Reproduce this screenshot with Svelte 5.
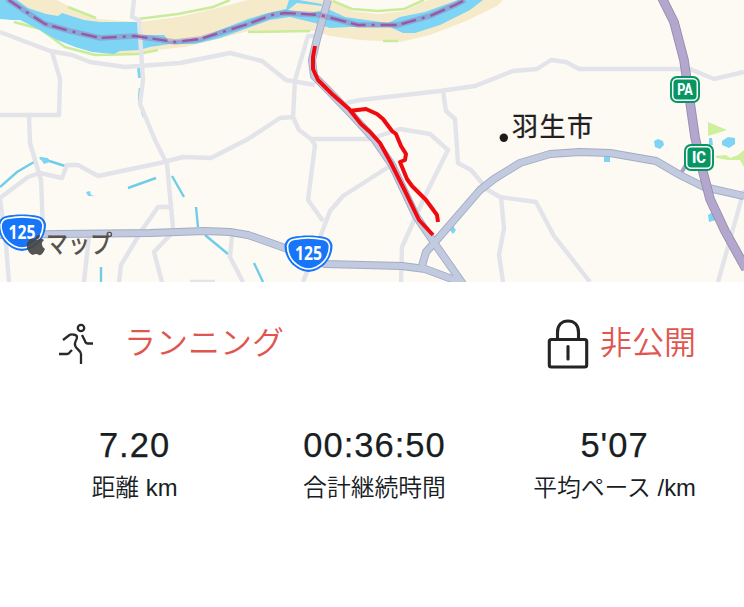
<script>
  const minorRoads = [
    'M0 32L50 51L72 55L90 62L125 67L180 63L230 53L262 61L286 80L315 85',
    'M134 0L132 17L139 20L142 65L143 80L140 104L155 140L167 164L173 228',
    'M52 52L60 79L59 115H0',
    'M29 115L30 143L41 180L43 230',
    'M0 198L28 177L40 173L62 178L67 165L78 165L98 176L160 163L183 157L211 158L248 139L280 118L293 117',
    'M315 36H308L295 80L293 117L299 130L311 139L315 145L308 200L323 221',
    'M311 139L370 139L400 129L430 134L448 150L425 196L402 247L401 282',
    'M346 103L360 100L440 91L475 86L513 71L537 69L551 60L566 62L579 69L690 69L714 79L744 72',
    'M443 91L446 111L455 119L458 163L471 170L488 190L500 197L536 202L554 236L590 282',
    'M501 197L504 228L499 255L503 282',
    'M390 166L343 196L330 211L303 282',
    'M173 207H158L142 230L121 265L119 282',
    'M173 232L154 252L162 282M89 236L84 282M232 236L230 257L243 282',
    'M0 198L6 245L9 282M718 282L744 190M190 282H215'
  ];
  const trunks = [
    'M0 235L60 234L150 233L205 231L230 232L248 235L285 248L325 264L402 266L425 269L460 282',
    'M422 266L426 252L435 242L480 190L494 179L520 163L550 154L580 152L610 153L656 161L680 175L704 187L744 196',
    'M328 0L317 39L312 60L314 76L327 89L351 114L374 139L392 165L416 216L435 244L463 284'
  ];
  const expressway = 'M662 -2L674 22L684 60L695 137L702 168L710 199L725 231L746 269';
  const green = [
    'M14 22L40 29L65 47L95 55L138 54L158 50', 'M68 7L96 18',
    'M138 19L178 14L213 7L230 0', 'M248 32L310 31M383 41H398',
    'M333 1L352 9L378 11L404 9L424 0'
  ];
  const streams = [
    'M0 187L17 172L34 162', 'M40 158L65 166', 'M128 188L156 178',
    'M172 176L184 197', 'M196 207L198 227', 'M205 235L228 254',
    'M101 267V282', 'M254 263L263 282', 'M140 88L139 100M142 112L144 117'
  ];
  const border = 'M7 -1L25 11L45 24L70 31L100 38L135 36L175 42L200 39L248 24L272 15L285 13L320 15L358 25H398L430 16L455 5L465 0';
  const stats = [
    { value: '7.20', label: '距離 km' },
    { value: '00:36:50', label: '合計継続時間' },
    { value: "5'07", label: '平均ペース /km' }
  ];
</script>

{#snippet shield(x, y)}
  <g transform={`translate(${x} ${y})`}>
    <path d="M-16-17C-6-19 6-19 16-17Q22-16 24-9C24 1 19 10 10 15Q0 21-10 15C-19 10-24 1-24-9Q-22-16-16-17Z" fill="#1675f8" />
    <path d="M-15-14.5C-6-16.5 6-16.5 15-14.5Q20-13.5 21-8C21 1 17 8 8 13Q0 17-8 13C-17 8-21 1-21-8Q-20-13.5-15-14.5Z" fill="none" stroke="#fff" stroke-width="1.6" />
    <text x="0" y="6" class="route" textLength="27" lengthAdjust="spacingAndGlyphs">125</text>
  </g>
{/snippet}

{#snippet sign(x, y, label)}
  <g transform={`translate(${x} ${y})`}>
    <rect x="-15" y="-13.5" width="30" height="27" rx="7" fill="#079663" />
    <rect x="-12.3" y="-10.8" width="24.6" height="21.6" rx="4.5" fill="none" stroke="#fff" stroke-width="1.5" />
    <text x="0" y="5.7" class="sign" textLength={label === 'PA' ? 15.5 : 14} lengthAdjust="spacingAndGlyphs">{label}</text>
  </g>
{/snippet}

<main>
  <svg class="map" viewBox="0 0 744 282" role="img" aria-label="羽生市">
    <rect width="744" height="282" fill="#fcfaf2" />
    <path d="M15 0H57L72 8L98 19L138 22L178 17L213 9L248 0H333L352 11L378 14L404 11L428 0H503L497 6L466 21L430 35L400 42L360 40L330 36L314 31L275 32L248 31L222 38L185 47L157 50L138 55L92 52Z" fill="#f5ebcb" />
    <g fill="none" stroke="#c9ec9b" stroke-width="2.5">
      {#each green as d}<path {d} />{/each}
    </g>
    <path d="M0 0H17L28 8L46 14L58 16L62 13L84 20L100 22H138L140 35H164L169 41L200 38L225 28L248 19L264 14L286 9L289 0H299L322 4V6L297 3L288 10L310 13L328 9L345 17L388 23L400 17L425 12L458 0H483L470 10L440 25L415 33H403L390 27H350L330 28L315 23L290 17L270 20L248 28L220 38L195 44H170L150 47L139 50L120 51L114 54L92 52L75 47L55 39L38 29L20 20L12 20L0 19Z" fill="#7dd4f4" />
    <g fill="none" stroke="#6fcde7" stroke-width="2.4">
      {#each streams as d}<path {d} />{/each}
    </g>
    <g fill="#7dd4f4">
      <path d="M137 68L140 67L142 78H138ZM138 96H141V101H138ZM39 157L48 158L50 162L44 164ZM86 192L90 191L91 195L95 196H88Z" />
      <path d="M654 141L658 139L663 141L664 145L660 149L655 147ZM722 141L728 137L735 138L735 144L729 148L722 145ZM604 156H610V162H604ZM708 215L713 212L716 220L709 222ZM449 229L453 226L456 230L453 234ZM709 138H712L713 145H709Z" />
    </g>
    <path d="M708 122L727 130L708 136ZM715 156L726 155L730 158L738 155L744 150V167L740 160L728 160L717 158Z" fill="#ceef9d" />
    <g fill="none" stroke="#e2e4ea" stroke-width="4.4" stroke-linejoin="round">
      {#each minorRoads as d}<path {d} />{/each}
    </g>
    <path d="M680 175L690 158" fill="none" stroke="#aaa0c7" stroke-width="4" />
    <g fill="none" stroke-linejoin="round">
      {#each trunks as d}<path {d} stroke="#a2acc4" stroke-width="8" />{/each}
      {#each trunks as d}<path {d} stroke="#c2cadf" stroke-width="6.2" />{/each}
      <path d={expressway} stroke="#948aae" stroke-width="9.5" />
      <path d={expressway} stroke="#b4a7ce" stroke-width="7.8" />
    </g>
    <g fill="none">
      <path d={border} stroke="#9570b2" stroke-opacity=".42" stroke-width="5.5" />
      <path d={border} stroke="#9859a2" stroke-width="2.4" stroke-dasharray="15 6 3 6 16 5" stroke-dashoffset="-2" />
    </g>
    <path d="M315 46L313 57L313 69L318 80L332 94L349 109L361 124L370 132L380 143L391 163L405 191L419 220L433 235M349 111L366 109L377 114L383 119L392 131L396 134L401 146L406 154L405 160L400 162L407 179L412 186L426 200L437 215L438 222" fill="none" stroke="#f00a10" stroke-width="4" stroke-linejoin="round" />
    {@render sign(685, 89.5, 'PA')}
    {@render sign(699, 157.5, 'IC')}
    <circle cx="503.8" cy="137.8" r="4.2" fill="#1b1b1b" />
    <text x="512" y="136" class="city" textLength="81">羽生市</text>
    {@render shield(22, 233)}
    {@render shield(308.5, 254)}
    <path d="M40 235Q36 235 35 239Q40 240 40 235ZM30 239Q34 237 37 240Q41 237 44 240Q39 244 45 249Q42 256 39 255Q36 253 33 255Q29 254 27 248Q26 242 30 239Z" fill="#454545" opacity=".92" />
    <text x="46" y="253" class="map-label" textLength="66" lengthAdjust="spacingAndGlyphs">マップ</text>
    <circle cx="109.5" cy="234.3" r="2" fill="#d3d5dc" stroke="#55534f" stroke-width="1.3" />
  </svg>

  <section class="activity">
    <svg class="runner" viewBox="0 0 36 42" aria-hidden="true">
      <circle cx="23" cy="5" r="3.2" />
      <path d="M5 17L11.5 12Q13 11 15 11.5Q19 12 19 14Q19 16 17.5 18.5C16 22 17 24 20 26.5Q23 29 23 31V41M1 31H9Q11 31 12 29L14 27M24 12L27 18Q27.5 20.5 30 20.5H35" />
    </svg>
    <span class="activity-name">ランニング</span>
    <svg class="lock" viewBox="0 0 42 50" aria-hidden="true">
      <path d="M10.5 20V13.5C10.5 6 15 2 21 2S31.5 6 31.5 13.5V20" />
      <rect x="2.3" y="20.5" width="37.4" height="27.5" rx="2" />
      <path d="M21 27.5V40" />
    </svg>
    <span class="privacy">非公開</span>
  </section>
  <section class="stats">
    {#each stats as stat}
      <div class="stat">
        <strong>{stat.value}</strong>
        <span>{stat.label}</span>
      </div>
    {/each}
  </section>
</main>

<style>
  :global(body) { margin: 0; background: #fff; }
  main { width: 744px; height: 607px; overflow: hidden; background: #fff; color: #17201f; font-family: "Noto Sans CJK JP", sans-serif; }
  .map { display: block; width: 744px; height: 282px; }
  .route { font: 700 20px "Open Sans", sans-serif; fill: #fff; text-anchor: middle; }
  .sign { font: 800 16px Roboto, sans-serif; fill: #fff; text-anchor: middle; }
  .city { font: 400 26px "Noto Sans CJK JP", sans-serif; fill: #202020; stroke: #202020; stroke-width: .3px; }
  .map-label { font: 500 25px "Noto Sans CJK JP", sans-serif; fill: #55534f; }
  .activity { display: flex; align-items: center; box-sizing: border-box; height: 124px; padding-left: 58px; }
  .runner { width: 36px; height: 42px; fill: none; stroke: #292929; stroke-width: 2.3; }
  .activity-name, .privacy { padding-bottom: 9px; color: #e0564f; font-size: 32px; font-weight: 350; line-height: 48px; white-space: nowrap; }
  .activity-name { width: 421px; margin-left: 30px; }
  .lock { width: 42px; height: 50px; margin-left: 2px; fill: none; stroke: #242424; stroke-width: 3.1; stroke-linecap: round; }
  .privacy { margin-left: 11px; }
  .stats { display: flex; height: 110px; padding-left: 14.5px; padding-top: 18px; }
  .stat { display: flex; flex-direction: column; align-items: center; width: 240px; white-space: nowrap; }
  .stat strong { font: 400 34.5px/42px "Liberation Sans", sans-serif; letter-spacing: 1px; -webkit-text-stroke: .25px #17201f; }
  .stat span { margin-top: 4px; font-family: "Liberation Sans", "Noto Sans CJK JP", sans-serif; font-size: 23.8px; font-weight: 350; line-height: 36px; }
</style>
